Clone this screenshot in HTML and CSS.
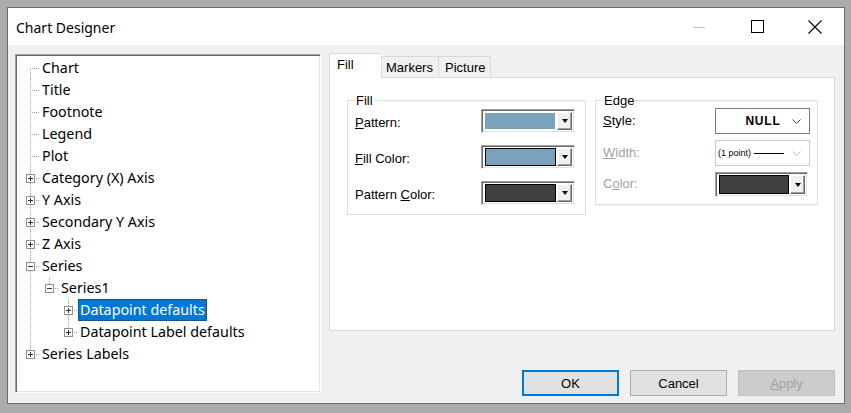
FILE: index.html
```html
<!DOCTYPE html>
<html lang="en">
<head>
    <meta charset="UTF-8">
    <meta name="viewport" content="width=device-width, initial-scale=1.0">
    <title>Chart Designer</title>
    <link rel="stylesheet" href="styles.css">
</head>
<body>
<div class="window">
  <div class="titlebar">
    <span class="caption">Chart Designer</span>
    <div class="caption_buttons">
      <span class="cap_btn"><svg width="12" height="12" viewBox="0 0 12 12"><line x1="0" y1="6.5" x2="12" y2="6.5" stroke="#c4c4c4" stroke-width="1"/></svg></span>
      <span class="cap_btn"><svg width="13" height="13" viewBox="0 0 13 13"><rect x="0.5" y="0.5" width="12" height="12" fill="none" stroke="#000" stroke-width="1"/></svg></span>
      <span class="cap_btn"><svg width="14" height="14" viewBox="0 0 14 14"><path d="M0.5 0.5 L13.5 13.5 M13.5 0.5 L0.5 13.5" stroke="#000" stroke-width="1.1"/></svg></span>
    </div>
  </div>

  <div class="client">
    <div class="tree">
      <div class="row"><span class="c f"></span><span class="txt">Chart</span></div>
      <div class="row"><span class="c t"></span><span class="txt">Title</span></div>
      <div class="row"><span class="c t"></span><span class="txt">Footnote</span></div>
      <div class="row"><span class="c t"></span><span class="txt">Legend</span></div>
      <div class="row"><span class="c t"></span><span class="txt">Plot</span></div>
      <div class="row"><span class="c t"><i class="box plus"></i></span><span class="txt">Category (X) Axis</span></div>
      <div class="row"><span class="c t"><i class="box plus"></i></span><span class="txt">Y Axis</span></div>
      <div class="row"><span class="c t"><i class="box plus"></i></span><span class="txt">Secondary Y Axis</span></div>
      <div class="row"><span class="c t"><i class="box plus"></i></span><span class="txt">Z Axis</span></div>
      <div class="row"><span class="c t"><i class="box"></i></span><span class="txt">Series</span></div>
      <div class="row"><span class="c v"></span><span class="c l"><i class="box"></i></span><span class="txt">Series1</span></div>
      <div class="row"><span class="c v"></span><span class="c"></span><span class="c t"><i class="box plus"></i></span><span class="txt selected">Datapoint defaults</span></div>
      <div class="row"><span class="c v"></span><span class="c"></span><span class="c l"><i class="box plus"></i></span><span class="txt">Datapoint Label defaults</span></div>
      <div class="row"><span class="c l"><i class="box plus"></i></span><span class="txt">Series Labels</span></div>
    </div>

    <div class="side">
      <div class="tabs">
        <span class="tab active">Fill</span>
        <span class="tab">Markers</span>
        <span class="tab">Picture</span>
      </div>
      <div class="panel">
        <fieldset class="group fill_group">
          <legend>Fill</legend>
          <div class="field">
            <span class="lbl"><u>P</u>attern:</span>
            <span class="colorbox"><span class="swatch blue"></span><span class="drop"><i class="tri"></i></span></span>
          </div>
          <div class="field">
            <span class="lbl"><u>F</u>ill Color:</span>
            <span class="colorbox"><span class="swatch blue framed"></span><span class="drop"><i class="tri"></i></span></span>
          </div>
          <div class="field">
            <span class="lbl">Pattern <u>C</u>olor:</span>
            <span class="colorbox"><span class="swatch dark framed"></span><span class="drop"><i class="tri"></i></span></span>
          </div>
        </fieldset>

        <fieldset class="group edge_group">
          <legend>Edge</legend>
          <div class="field">
            <span class="lbl"><u>S</u>tyle:</span>
            <span class="select"><b>NULL</b><svg width="9" height="5" viewBox="0 0 9 5"><polyline points="0.5,0.5 4.5,4.5 8.5,0.5" fill="none" stroke="#444" stroke-width="1"/></svg></span>
          </div>
          <div class="field">
            <span class="lbl off"><u>W</u>idth:</span>
            <span class="select disabled"><small>(1 point)</small><i class="stroke"></i><svg width="9" height="5" viewBox="0 0 9 5"><polyline points="0.5,0.5 4.5,4.5 8.5,0.5" fill="none" stroke="#b8b8b8" stroke-width="1"/></svg></span>
          </div>
          <div class="field">
            <span class="lbl off">C<u>o</u>lor:</span>
            <span class="colorbox narrow"><span class="swatch dark framed"></span><span class="drop"><i class="tri"></i></span></span>
          </div>
        </fieldset>
      </div>

      <div class="buttons">
        <button class="btn default">OK</button>
        <button class="btn">Cancel</button>
        <button class="btn disabled"><u>A</u>pply</button>
      </div>
    </div>
  </div>
</div>
</body>
</html>
```

FILE: styles.css
```css
* {
    margin: 0;
    padding: 0;
    box-sizing: border-box;
}
body {
    background-color: #ababab;
    width: 851px;
    height: 413px;
    overflow: hidden;
    font-family: "Liberation Sans", Arial, sans-serif;
}
.window {
    margin: 7px 0 0 7px;
    width: 838px;
    height: 397px;
    border: 1px solid #6b6b6b;
    background-color: #f0f0f0;
    display: flex;
    flex-direction: column;
}

/* title bar */
.titlebar {
    height: 37px;
    background-color: #fff;
    display: flex;
    align-items: center;
}
.caption {
    padding-left: 8px;
    padding-top: 1px;
    font-family: "Noto Sans", "Open Sans", sans-serif;
    font-size: 14px;
    color: #000;
}
.caption_buttons {
    margin-left: auto;
    display: flex;
    height: 100%;
}
.cap_btn {
    width: 58px;
    display: flex;
    align-items: center;
    justify-content: center;
}

/* body */
.client {
    flex: 1;
    display: flex;
    gap: 8px;
    padding: 8px 9px 7px 7px;
}

/* tree view */
.tree {
    width: 306px;
    margin: 1px 0 3px 0;
    background-color: #fff;
    border: 1px solid;
    border-color: #a0a0a0 #fff #fff #a0a0a0;
    box-shadow: inset 1px 1px 0 #696969, inset -1px -1px 0 #e3e3e3;
    padding: 2px 0 0 5px;
    font-family: "Noto Sans", "Open Sans", sans-serif;
    font-size: 14.3px;
    color: #000;
}
.row {
    display: flex;
    height: 22px;
    align-items: center;
}
.c {
    width: 19px;
    height: 22px;
    flex: none;
    position: relative;
    background-repeat: no-repeat;
}
.c.v {
    background-image: repeating-linear-gradient(to bottom, #a0a0a0 0 1px, transparent 1px 2px);
    background-size: 1px 22px;
    background-position: 9px 0;
}
.c.t {
    background-image: repeating-linear-gradient(to bottom, #a0a0a0 0 1px, transparent 1px 2px),
                      repeating-linear-gradient(to right, #a0a0a0 0 1px, transparent 1px 2px);
    background-size: 1px 22px, 9px 1px;
    background-position: 9px 0, 11px 11px;
}
.c.f {
    background-image: repeating-linear-gradient(to bottom, #a0a0a0 0 1px, transparent 1px 2px),
                      repeating-linear-gradient(to right, #a0a0a0 0 1px, transparent 1px 2px);
    background-size: 1px 11px, 9px 1px;
    background-position: 9px 11px, 11px 11px;
}
.c.l {
    background-image: repeating-linear-gradient(to bottom, #a0a0a0 0 1px, transparent 1px 2px),
                      repeating-linear-gradient(to right, #a0a0a0 0 1px, transparent 1px 2px);
    background-size: 1px 12px, 9px 1px;
    background-position: 9px 0, 11px 11px;
}
.box {
    position: absolute;
    left: 5px;
    top: 7px;
    width: 9px;
    height: 9px;
    border: 1px solid #919191;
    background-color: #fff;
    background-image: linear-gradient(#333, #333);
    background-size: 5px 1px;
    background-position: 1px 3px;
    background-repeat: no-repeat;
}
.box.plus {
    background-image: linear-gradient(#333, #333), linear-gradient(#333, #333);
    background-size: 5px 1px, 1px 5px;
    background-position: 1px 3px, 3px 1px;
}
.txt {
    margin-left: 0;
    padding: 0 2px;
    height: 22px;
    line-height: 22px;
    white-space: nowrap;
}
.txt.selected {
    background-color: #0078d7;
    color: #fff;
    outline: 1px dotted #333;
    outline-offset: -1px;
}

/* right side */
.side {
    flex: 1;
    display: flex;
    flex-direction: column;
}
.tabs {
    height: 24px;
    display: flex;
    align-items: flex-end;
    font-size: 13px;
    position: relative;
    z-index: 1;
}
.tab {
    height: 21px;
    padding: 3px 0 0 4px;
    border: 1px solid #d9d9d9;
    border-bottom: none;
    background-color: #f0f0f0;
    color: #000;
}
.tab:nth-child(2) {
    width: 58px;
}
.tab:nth-child(3) {
    width: 52px;
    border-left: none;
    padding-left: 6px;
}
.tab.active {
    width: 52px;
    height: 25px;
    margin-bottom: -1px;
    background-color: #fff;
    padding: 3px 0 0 7px;
    border-right: none;
}
.panel {
    height: 254px;
    background-color: #fff;
    border: 1px solid #d9d9d9;
    padding: 15px 0 0 17px;
    display: flex;
    align-items: flex-start;
    gap: 9px;
    font-size: 13px;
}
.group {
    border: 1px solid #dcdcdc;
    padding: 0 0 0 7px;
}
.group legend {
    padding: 0 1px;
    margin-left: 0;
    font-size: 13px;
    line-height: 15px;
}
.fill_group {
    width: 239px;
    padding-top: 1px;
    padding-bottom: 9px;
}
.edge_group {
    width: 223px;
    padding-bottom: 7px;
}
.field {
    display: flex;
    align-items: center;
    justify-content: space-between;
    padding-right: 10px;
}
.fill_group .field {
    height: 24px;
    margin-bottom: 12px;
}
.fill_group .field .lbl {
    margin-top: 3px;
}
.fill_group .field:last-of-type {
    margin-bottom: 0;
}
.edge_group .field {
    height: 26px;
    margin-bottom: 6px;
    padding-right: 7px;
}
.edge_group .field .lbl {
    margin-top: -2px;
}
.edge_group .field:last-of-type {
    margin-bottom: 0;
    height: 25px;
    padding-right: 9px;
}
.lbl {
    color: #000;
}
.lbl.off {
    color: #a3a3a3;
}

/* colour combo */
.colorbox {
    width: 94px;
    height: 24px;
    display: flex;
    border: 1px solid;
    border-color: #a0a0a0 #fff #fff #a0a0a0;
    box-shadow: inset 1px 1px 0 #696969, inset -1px -1px 0 #e3e3e3;
    background-color: #fff;
    padding: 2px 2px 2px 3px;
}
.colorbox.narrow {
    width: 93px;
    height: 25px;
}
.swatch {
    flex: 1;
    margin: 1px 2px 1px 0;
}
.swatch.blue {
    background-color: #7ba2bd;
}
.swatch.dark {
    background-color: #404040;
}
.swatch.framed {
    margin: 0 1px 0 0;
    border: 1px solid #000;
}
.drop {
    width: 15px;
    background-color: #f0f0f0;
    border: 1px solid;
    border-color: #fff #696969 #696969 #fff;
    box-shadow: inset -1px -1px 0 #a0a0a0;
    display: flex;
    align-items: center;
    justify-content: center;
}
.tri {
    width: 0;
    height: 0;
    border-left: 3.5px solid transparent;
    border-right: 3.5px solid transparent;
    border-top: 4px solid #000;
}

/* style / width select */
.select {
    width: 95px;
    height: 100%;
    border: 1px solid #7a7a7a;
    background-color: #fff;
    display: flex;
    align-items: center;
    padding: 0 8px 0 0;
}
.select b {
    flex: 1;
    text-align: center;
    font-size: 12px;
    letter-spacing: 0.8px;
    padding-left: 18px;
}
.select.disabled {
    border-color: #cccccc;
    padding-left: 2px;
}
.select small {
    font-size: 9px;
    color: #000;
}
.select .stroke {
    width: 30px;
    height: 1px;
    background-color: #000;
    margin: 1px 0 0 3px;
    flex: none;
}
.select.disabled svg {
    margin-left: auto;
}

/* dialog buttons */
.buttons {
    margin-top: auto;
    display: flex;
    justify-content: flex-end;
    gap: 11px;
}
.btn {
    width: 97px;
    height: 26px;
    background-color: #e1e1e1;
    border: 1px solid #adadad;
    font-family: "Liberation Sans", Arial, sans-serif;
    font-size: 13px;
    color: #000;
}
.btn.default {
    border: 2px solid #0078d7;
}
.btn.disabled {
    background-color: #cccccc;
    border-color: #bfbfbf;
    color: #a0a0a0;
}
```
